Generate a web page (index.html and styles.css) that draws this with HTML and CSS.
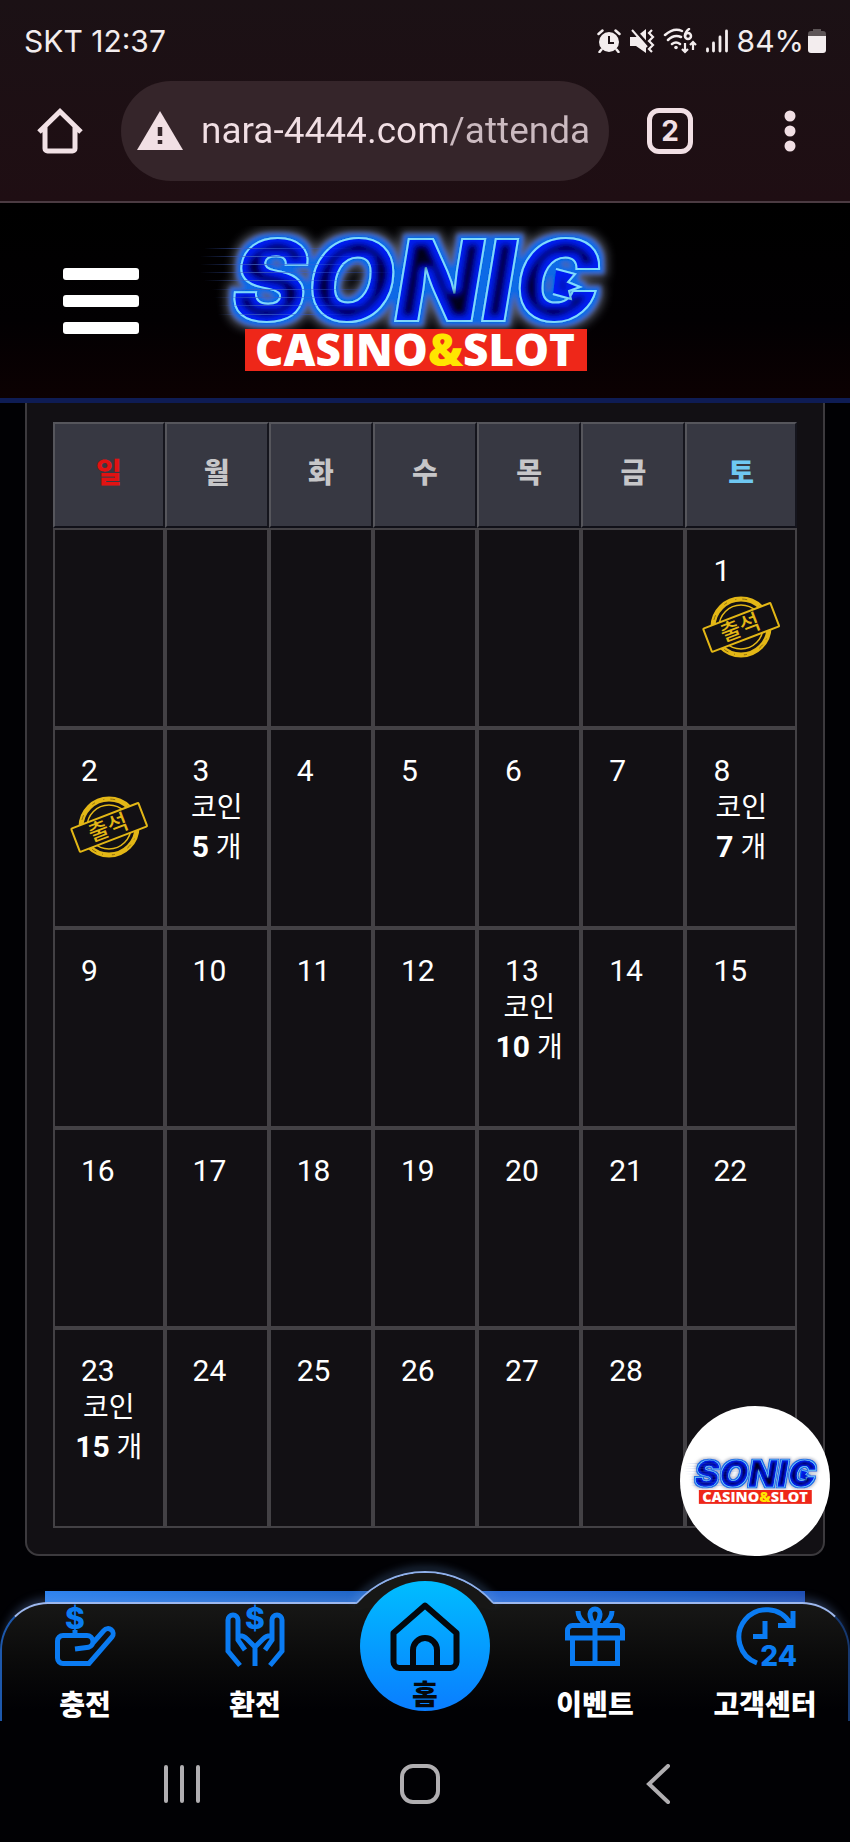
FILE: index.html
```html
<!DOCTYPE html>
<html lang="ko">
<head>
<meta charset="utf-8">
<meta name="viewport" content="width=device-width, initial-scale=1">
<title>출석 달력</title>
<link rel="stylesheet" href="styles.css">
</head>
<body>
<svg class="defs" aria-hidden="true">
  <defs>
    <filter id="neon" filterUnits="userSpaceOnUse" x="0" y="0" width="430" height="120">
      <feMorphology in="SourceAlpha" operator="dilate" radius="7" result="w"/>
      <feGaussianBlur in="w" stdDeviation="5" result="wb"/>
      <feFlood flood-color="#8a93a8" flood-opacity=".6"/>
      <feComposite in2="wb" operator="in" result="halo"/>
      <feMorphology in="SourceAlpha" operator="dilate" radius="4" result="r"/>
      <feGaussianBlur in="r" stdDeviation="2" result="rb"/>
      <feFlood flood-color="#0c6ae6"/>
      <feComposite in2="rb" operator="in" result="ring"/>
      <feMorphology in="SourceAlpha" operator="erode" radius="6" result="e"/>
      <feGaussianBlur in="e" stdDeviation="3" result="eb"/>
      <feFlood flood-color="#00041f"/>
      <feComposite in2="eb" operator="in" result="core"/>
      <feMerge>
        <feMergeNode in="halo"/>
        <feMergeNode in="ring"/>
        <feMergeNode in="SourceGraphic"/>
        <feMergeNode in="core"/>
      </feMerge>
    </filter>
    <linearGradient id="speed" x1="0" x2="1">
      <stop offset="0" stop-color="#3d5ec0" stop-opacity="0"/>
      <stop offset=".3" stop-color="#3d5ec0" stop-opacity=".8"/>
      <stop offset="1" stop-color="#2a5cff" stop-opacity="0"/>
    </linearGradient>
    <symbol id="logo" viewBox="0 0 430 150">
      <g filter="url(#neon)">
        <text class="logo-name" x="32" y="95">SONIC</text>
        <path d="M356 43L375 48 368 56 380 61 369 65 371 73 353 68" fill="#0022f5" stroke="#7fdcff" stroke-width="2"/>
      </g>
      <g fill="url(#speed)">
        <rect x="4" y="22" width="150" height="1"/>
        <rect x="0" y="30" width="180" height="1"/>
        <rect x="0" y="38" width="190" height="1"/>
        <rect x="0" y="46" width="200" height="1"/>
        <rect x="4" y="54" width="180" height="1"/>
        <rect x="12" y="63" width="170" height="1"/>
        <rect x="14" y="71" width="160" height="1"/>
        <rect x="18" y="79" width="150" height="1"/>
        <rect x="18" y="88" width="140" height="1"/>
      </g>
      <rect x="45" y="103" width="342" height="42" fill="#ee2719"/>
      <text class="logo-sub" x="215" y="140" text-anchor="middle">CASINO<tspan fill="#ffe600">&amp;</tspan>SLOT</text>
    </symbol>
    <symbol id="stamp" viewBox="0 0 80 64">
      <g fill="none" stroke="#e3b716">
        <circle cx="40" cy="32" r="28" stroke-width="5"/>
        <circle cx="40" cy="32" r="28" stroke="#8a6b0c" stroke-width="1" stroke-dasharray="3 9 1 6 5 14"/>
        <circle cx="40" cy="32" r="22" stroke-width="1.500"/>
        <rect x="4" y="20" width="72" height="25" rx="1" fill="#121014" stroke-width="2" transform="rotate(-21 40 32)"/>
      </g>
      <text class="stamp-text" x="39" y="40" text-anchor="middle" transform="rotate(-21 40 32)">출석</text>
    </symbol>
  </defs>
</svg>

<div class="chrome">
  <div class="status">
    <span>SKT 12:37</span>
    <div class="status-icons">
      <svg width="24" height="24" viewBox="0 0 24 24"><circle cx="12" cy="13" r="10" fill="#f3edee"/><path d="M1.500 5L5.500 1.500M22.500 5L18.500 1.500M4.500 20.500L2.500 23M19.500 20.500L21.500 23" stroke="#f3edee" stroke-width="2.500" stroke-linecap="round"/><path d="M12 7v7h5" fill="none" stroke="#1c1115" stroke-width="2"/></svg>
      <svg width="26" height="24" viewBox="0 0 26 24"><path d="M1 8h6l10-8v24L7 17H1z" fill="#f3edee"/><path d="M4 -1L20 17" stroke="#1c1115" stroke-width="3"/><path d="M3 1L18 18" stroke="#f3edee" stroke-width="2"/><path d="M23 1l-3 3 4 4-4 4 4 4-4 4 3 3" fill="none" stroke="#f3edee" stroke-width="2.200"/></svg>
      <svg width="34" height="26" viewBox="0 0 34 26"><g fill="none" stroke="#f3edee" stroke-width="2.500" stroke-linecap="round"><path d="M2 7Q11-1 19 3M5 12q6-6 13-3M9 16q4-3 8 0"/><circle cx="25" cy="8" r="3"/><path d="M26 1q-4 3-4 7"/></g><circle cx="13" cy="19.500" r="1.800" fill="#f3edee"/><path d="M22 15v9M19 21l3 3 3-3M30 22v-8M27 17l3-3 3 3" fill="none" stroke="#f3edee" stroke-width="2.200"/></svg>
      <svg width="24" height="24" viewBox="0 0 24 24"><path d="M2.500 20v2M8.500 14v8M15 8v14M21.500 2v20" stroke="#f3edee" stroke-width="2.800" stroke-linecap="round"/></svg>
      <span class="percent">84%</span>
      <svg width="18" height="24" viewBox="0 0 18 24"><path d="M5 0h8v2h2a3 3 0 0 1 3 3v3H0V5a3 3 0 0 1 3-3h2z" fill="#5d5557"/><path d="M0 7h18v14a3 3 0 0 1-3 3H3a3 3 0 0 1-3-3z" fill="#f3edee"/></svg>
    </div>
  </div>
  <div class="toolbar">
    <button class="icon-btn" aria-label="홈페이지"><svg width="46" height="46" viewBox="0 0 46 46"><path d="M2 24L23 3.500 44 24M8 19V40.500a2.500 2.500 0 0 0 2.500 2.500h25a2.500 2.500 0 0 0 2.500-2.500V19" fill="none" stroke="#f1e1e5" stroke-width="5"/></svg></button>
    <div class="address">
      <svg width="46" height="40" viewBox="0 0 46 40"><path d="M23 0l23 39H0z" fill="#f1dfe4"/><path d="M23 16v9M23 29v4" stroke="#35252a" stroke-width="4.500"/></svg>
      <input class="url" type="text" aria-label="주소" value="nara-4444.com/attenda">
    </div>
    <button class="icon-btn tabs" aria-label="탭">2</button>
    <button class="icon-btn more" aria-label="메뉴 더보기"><svg width="46" height="46" viewBox="0 0 46 46" fill="#f1dfe4"><circle cx="23" cy="8" r="5.500"/><circle cx="23" cy="23" r="5.500"/><circle cx="23" cy="38" r="5.500"/></svg></button>
  </div>
</div>

<header class="site-header">
  <button class="menu" aria-label="메뉴"><span></span><span></span><span></span></button>
  <a href="#" aria-label="SONIC CASINO&amp;SLOT"><svg class="logo" viewBox="0 0 430 150"><use href="#logo"/></svg></a>
</header>

<main class="panel">
  <table class="calendar">
    <thead>
      <tr><th class="sun">일</th><th>월</th><th>화</th><th>수</th><th>목</th><th>금</th><th class="sat">토</th></tr>
    </thead>
    <tbody>
      <tr><td></td><td></td><td></td><td></td><td></td><td></td><td><time>1</time><svg class="stamp" role="img" aria-label="출석"><use href="#stamp"/></svg></td></tr>
      <tr><td><time>2</time><svg class="stamp" role="img" aria-label="출석"><use href="#stamp"/></svg></td><td><time>3</time><p>코인<br><b>5</b> 개</p></td><td><time>4</time></td><td><time>5</time></td><td><time>6</time></td><td><time>7</time></td><td><time>8</time><p>코인<br><b>7</b> 개</p></td></tr>
      <tr><td><time>9</time></td><td><time>10</time></td><td><time>11</time></td><td><time>12</time></td><td><time>13</time><p>코인<br><b>10</b> 개</p></td><td><time>14</time></td><td><time>15</time></td></tr>
      <tr><td><time>16</time></td><td><time>17</time></td><td><time>18</time></td><td><time>19</time></td><td><time>20</time></td><td><time>21</time></td><td><time>22</time></td></tr>
      <tr><td><time>23</time><p>코인<br><b>15</b> 개</p></td><td><time>24</time></td><td><time>25</time></td><td><time>26</time></td><td><time>27</time></td><td><time>28</time></td><td></td></tr>
    </tbody>
  </table>
  <button class="fab" aria-label="SONIC CASINO&amp;SLOT"><svg viewBox="0 0 430 150"><use href="#logo"/></svg></button>
</main>

<nav class="dock">
  <div class="dock-strip"></div>
  <div class="dock-bar"></div>
  <svg class="dock-bump" viewBox="0 0 170 60"><path class="arc" d="M15 36H17A90 90 0 0 1 153 36H155"/><path d="M15 41V38L18 36A90 90 0 0 1 152 36L155 38V41Z" fill="#171716"/></svg>
  <ul>
    <li><a href="#"><svg class="glyph" viewBox="0 0 60 60"><path d="M37 38L49 24.500a5 5 0 0 1 8 6.500L34 57.500H8a5.500 5.500 0 0 1-5.500-5.500V35A5.500 5.500 0 0 1 8 29.500H32a6 6 0 0 1 1.500 11.800L20 43M20 24v5"/><text x="20" y="23" text-anchor="middle">$</text></svg>충전</a></li>
    <li><a href="#"><svg class="glyph" viewBox="0 0 60 60"><path d="M15 59.500L3 45V14a5 5 0 0 1 10 0V34L20 44M13 30q5-1 9 3l8 8V60M30 41l8-8q4-4 9-3M45 59.500L57 45V14a5 5 0 0 0-10 0V34L40 44"/><text x="30" y="23" text-anchor="middle">$</text></svg>환전</a></li>
    <li><a class="home" href="#"><svg viewBox="0 0 70 70"><path d="M3.500 31L35 3.500 66.500 31V60a6 6 0 0 1-6 6h-51a6 6 0 0 1-6-6ZM23 66V48a12 12 0 0 1 24 0V66" fill="none" stroke="#04080d" stroke-width="6" stroke-linejoin="round"/></svg>홈</a></li>
    <li><a href="#"><svg class="glyph" viewBox="0 0 60 60"><path d="M2.500 32V24.500a5 5 0 0 1 5-5h45a5 5 0 0 1 5 5V32ZM7.500 32V57.500h45V32M30 19V57M30 19q-5-5-5-11a5 5 0 0 1 10 0q0 6-5 11M13 5q0 8 8 13M47 5q0 8-8 13"/></svg>이벤트</a></li>
    <li><a href="#"><svg class="glyph" viewBox="0 0 60 60"><path d="M22 57A27.500 27.500 0 1 1 55 17M58 5V19.500H43M30 15V30.500H18"/><text class="hours" x="62" y="60" text-anchor="end">24</text></svg>고객센터</a></li>
  </ul>
</nav>

<div class="system">
  <button class="icon-btn" aria-label="최근 앱"><svg width="40" height="40" viewBox="0 0 40 40"><path d="M4 3v34M20 3v34M36 3v34"/></svg></button>
  <button class="icon-btn" aria-label="홈"><svg width="40" height="40" viewBox="0 0 40 40"><rect x="2" y="2" width="36" height="36" rx="11"/></svg></button>
  <button class="icon-btn" aria-label="뒤로"><svg width="40" height="40" viewBox="0 0 40 40"><path d="M30 2L11 20 30 38"/></svg></button>
</div>
</body>
</html>
```

FILE: styles.css
```css
* { box-sizing: border-box; }

body {
  margin: 0;
  background: #010104;
  color: #fff;
  font-family: Roboto, "Noto Sans CJK KR", sans-serif;
}

button {
  padding: 0;
  border: 0;
  background: none;
  color: inherit;
  font: inherit;
}

a { color: inherit; text-decoration: none; }
svg { display: block; }
.defs { position: absolute; width: 0; height: 0; }

/* Browser chrome */
.chrome {
  background: linear-gradient(#1b1115, #1f0e13);
  border-bottom: 2px solid #4b3b42;
}

.status {
  display: flex;
  align-items: center;
  justify-content: space-between;
  height: 81px;
  padding: 0 24px;
  color: #f3edee;
  font: 400 30px/40px Inter, sans-serif;
}

.status-icons { display: flex; align-items: center; gap: 8px; }
.percent { margin-right: -4px; }

.toolbar {
  display: flex;
  align-items: center;
  gap: 38px;
  padding: 0 37px 20px;
}

.icon-btn { flex: none; }

.address {
  flex: 1;
  display: flex;
  align-items: center;
  gap: 18px;
  min-width: 0;
  height: 100px;
  padding: 0 16px;
  border-radius: 50px;
  background: #35252a;
}

.address svg { flex: none; }

.url {
  flex: 1;
  min-width: 0;
  padding: 0;
  border: 0;
  outline: 0;
  background: linear-gradient(90deg, #f1dfe4 240px, #cbbac0 250px);
  -webkit-background-clip: text;
  background-clip: text;
  color: transparent;
  font: 400 37px/48px Roboto, sans-serif;
}

.tabs {
  width: 46px;
  height: 46px;
  border: 5px solid #f1dfe4;
  border-radius: 12px;
  color: #f1dfe4;
  font: 700 28px/36px Inter, sans-serif;
}

.more { margin-left: 36px; }

/* Site header */
.site-header {
  display: flex;
  align-items: center;
  gap: 61px;
  height: 200px;
  padding-left: 63px;
  background: linear-gradient(#000, #020002 60%, #0c0102);
  border-bottom: 5px solid #0e1c54;
}

.menu { display: grid; gap: 15px; width: 76px; }
.menu span { height: 12px; border-radius: 3px; background: #fff; }

.logo { width: 430px; height: 150px; }

.logo-name {
  fill: #0022f5;
  stroke: #7fdcff;
  stroke-width: 2px;
  font: italic 900 113px Inter, sans-serif;
}

.logo-sub { fill: #fff; font: 800 44px "Open Sans", sans-serif; }

/* Attendance calendar */
.panel {
  position: relative;
  margin: 0 25px;
  padding: 19px 26px 26px;
  border: 2px solid #3c3a3e;
  border-top: 0;
  border-radius: 0 0 14px 14px;
  background: #121014;
}

.calendar {
  width: 100%;
  table-layout: fixed;
  border-spacing: 0;
}

.calendar th {
  width: 14%;
  height: 106px;
  padding: 0 0 8px;
  border: 2px solid;
  border-color: #56565c #15151d #101018 #56565c;
  background: #373842;
  color: #c6c6c8;
  font-size: 28px;
  font-weight: 900;
}

.calendar .sun { width: 15%; color: #e11212; }
.calendar .sat { width: 15%; color: #6fc8f2; }

.calendar td {
  height: 200px;
  padding: 24px 0 0;
  border: 2px solid #434145;
  vertical-align: top;
}

.calendar time {
  display: block;
  padding-left: 26px;
  font-size: 30px;
  line-height: 34px;
}

.calendar p {
  margin: 0;
  font-size: 28px;
  line-height: 40px;
  text-align: center;
}

.calendar b { font-size: 30px; line-height: 1; }

.stamp { width: 80px; height: 64px; margin: 7px auto 0; }
.stamp-text { fill: #e3b716; font: 500 22px "Noto Sans CJK KR", sans-serif; }

.fab {
  position: absolute;
  right: -7px;
  bottom: -2px;
  width: 150px;
  height: 150px;
  padding: 0 4px;
  border-radius: 50%;
  background: #fff;
}

/* Bottom navigation */
.dock {
  position: relative;
  height: 150px;
  margin-top: 15px;
}

.dock-strip {
  position: absolute;
  inset: 20px 45px auto;
  height: 14px;
  background: linear-gradient(90deg, #2d83f0, #1f65c8 40%, #2a6cd8 60%, #1b5cc4 85%, #1c4bb0);
}

.dock-bar {
  position: absolute;
  inset: 31px 0 0;
  border: 2px solid;
  border-bottom: 0;
  border-color: #9db8ee #16386f transparent #1d58ac;
  border-radius: 48px 48px 0 0;
  background: linear-gradient(#171716, #0b0b0b 45%, #010104 90%);
  box-shadow: 0 -8px 10px -4px rgb(120 160 230 / .3);
}

.dock-bump {
  position: absolute;
  top: -4px;
  left: 50%;
  width: 170px;
  height: 60px;
  transform: translateX(-50%);
  overflow: visible;
}

.arc {
  fill: none;
  stroke: #8fb0ea;
  stroke-width: 2px;
  filter: drop-shadow(0 -2px 5px #6ea5e6);
}

.dock ul {
  position: relative;
  display: grid;
  grid-template-columns: repeat(5, 1fr);
  margin: 0;
  padding: 0;
  list-style: none;
}

.dock a {
  display: flex;
  flex-direction: column;
  align-items: center;
  gap: 20px;
  padding-top: 35px;
  font-size: 28px;
  font-weight: 900;
  line-height: 40px;
  white-space: nowrap;
}

.dock .home {
  gap: 4px;
  width: 130px;
  height: 130px;
  margin: 10px auto 0;
  padding-top: 21px;
  border-radius: 50%;
  background: linear-gradient(#00bdff, #0a7dff);
  color: #04080d;
}

.home svg { flex: none; width: 70px; height: 70px; }

.glyph {
  width: 60px;
  height: 60px;
  overflow: visible;
  fill: none;
  stroke: #0a7bf2;
  stroke-width: 5px;
}

.glyph text { fill: #0a7bf2; stroke: none; font: 800 30px Inter, sans-serif; }
.glyph .hours { font-size: 28px; }

/* System navigation */
.system {
  display: flex;
  align-items: center;
  justify-content: space-between;
  height: 119px;
  padding: 6px 172px 0 162px;
}

.system svg { fill: none; stroke: #b0aeb1; stroke-width: 4px; stroke-linecap: round; }
```
